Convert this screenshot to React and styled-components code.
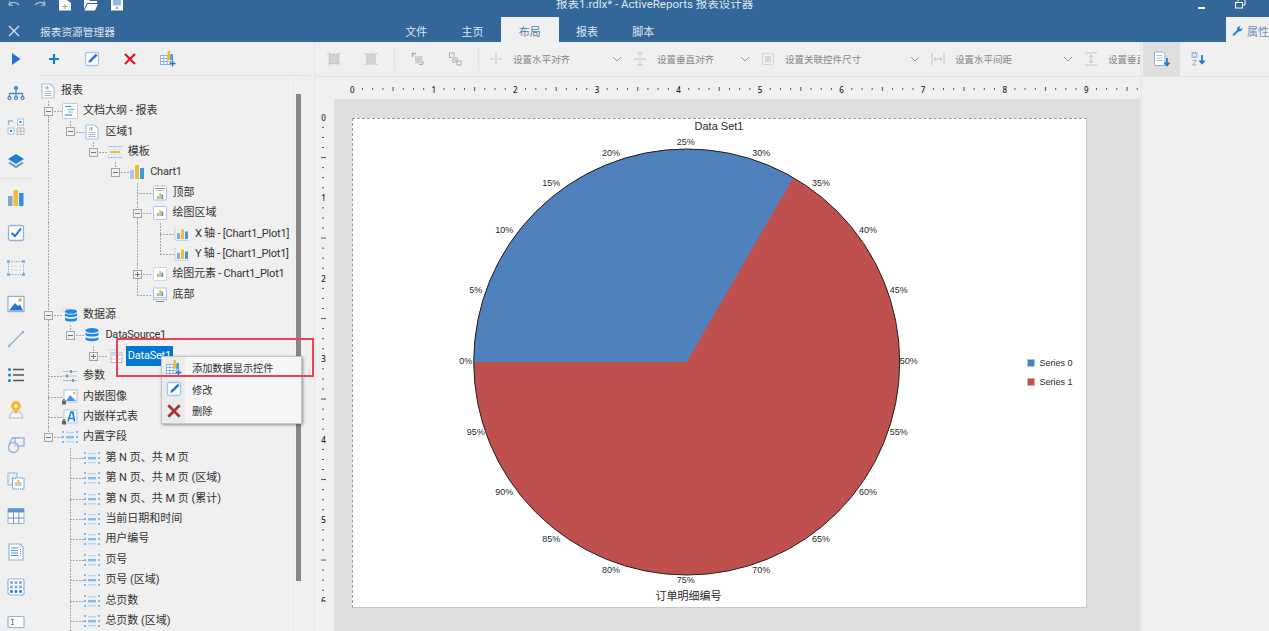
import React from 'react';
import styled, { createGlobalStyle } from 'styled-components';

const Global = createGlobalStyle`
  html, body { margin: 0; padding: 0; height: 100%; overflow: hidden; background: #f0f0f0; }
  #root { height: 100%; }
`;

const FONT = `Roboto, "Noto Sans CJK SC", sans-serif`;
const BLUE = '#336699';
const PANEL = '#f0f0f0';

const Shell = styled.div`
  width: 1269px; height: 631px; display: flex; flex-direction: column; overflow: hidden;
  background: ${PANEL}; font-family: ${FONT}; font-size: 11px; color: #333;
`;
const Header = styled.header`background: ${BLUE}; color: #dfe7ef; flex: none;`;
const TopRow = styled.div`display: flex; height: 17px; overflow: hidden; align-items: flex-start;`;
const Qat = styled.div`display: flex; padding-left: 1px;`;
const QatButton = styled.div`width: 25.8px; display: flex; justify-content: center;`;
const WindowTitle = styled.div`margin: -4px 0 0 426px; font-size: 11.5px; line-height: 16px; white-space: nowrap;`;
const WinButtons = styled.div`margin-left: auto; display: flex; padding-right: 10px;`;
const WinButton = styled.div`width: 38px; display: flex; justify-content: center;`;
const TabRow = styled.div`display: flex; height: 25px; align-items: stretch;`;
const Close = styled.div`width: 28px; padding-top: 3px; box-sizing: border-box; display: flex; align-items: center; justify-content: center;`;
const PanelName = styled.div`width: 360px; padding: 3px 0 0 12px; box-sizing: border-box; display: flex; align-items: center; font-size: 10.7px;`;
const Tab = styled.div`
  display: flex; align-items: center; justify-content: center; width: ${p => (p.$active ? 58 : 56.4)}px;
  padding-top: 3px; box-sizing: border-box;
  background: ${p => (p.$active ? PANEL : 'transparent')}; color: ${p => (p.$active ? '#4f7fae' : '#dfe7ef')};
`;
const PropTab = styled.div`
  margin-left: auto; width: 43px; background: ${PANEL}; color: #6a90b6; display: flex; align-items: center;
  gap: 4px; padding: 3px 0 0 6px; box-sizing: border-box; white-space: nowrap; overflow: hidden;
`;

const Body = styled.div`flex: 1; display: flex; min-height: 0;`;

const Rail = styled.nav`width: 35px; flex: none; padding-right: 3px; box-sizing: border-box; display: flex; flex-direction: column;`;
const RailGroup = styled.div`display: flex; flex-direction: column; & + & { border-top: 1px solid #e2e2e2; padding-top: 1px; }`;
const RailItem = styled.div`height: ${p => p.$h}px; display: flex; align-items: center; justify-content: center; flex: none;`;

const Explorer = styled.aside`
  position: relative; width: 280px; flex: none; display: flex; flex-direction: column; border-right: 1px solid #e8e8e8; box-sizing: border-box;
`;
const ExplorerBar = styled.div`display: flex; height: 34px; flex: none; position: relative;
  &::after { content: ''; position: absolute; left: 3px; right: 4px; bottom: 0; height: 1px; background: #e4e4e4; }
`;
const BarButton = styled.div`width: 38px; display: flex; align-items: center; justify-content: center;`;
const TreeWrap = styled.div`flex: 1; display: flex; min-height: 0;`;
const Tree = styled.div`width: 255px; flex: none; padding: 4.6px 0 0 1.8px; box-sizing: border-box; overflow: hidden;`;
const ScrollTrack = styled.div`flex: 1; border-left: 1px solid #f6f6f6; padding: 18px 0 0 5px;`;
const ScrollThumb = styled.div`width: 4.5px; height: 487px; background: #868686;`;
const Row = styled.div`display: flex; align-items: center; height: 20.4px; white-space: nowrap;`;
const DOTS_V = `background: repeating-linear-gradient(180deg, #a8a8a8 0 2px, transparent 2px 3px);`;
const DOTS_H = `background: repeating-linear-gradient(90deg, #a8a8a8 0 2px, transparent 2px 3px);`;
const Guide = styled.div`
  width: 22.4px; height: 100%; position: relative; flex: none;
  ${p => (p.$kind === 'v' || p.$kind === 'T') && `
    &::before { content: ''; position: absolute; left: 11px; width: 1px; top: 0; bottom: 0; ${DOTS_V} }
  `}
  ${p => p.$kind === 'L' && `
    &::before { content: ''; position: absolute; left: 11px; width: 1px; top: 0; height: 50%; ${DOTS_V} }
  `}
  ${p => (p.$kind === 'T' || p.$kind === 'L') && `
    &::after { content: ''; position: absolute; left: 11px; width: 14px; top: 50%; height: 1px; ${DOTS_H} }
  `}
`;
const Expander = styled.span`
  position: absolute; z-index: 1; left: 7px; top: 6px; width: 7px; height: 7px; background: ${PANEL}; border: 1px solid #a4a4a4;
  &::before { content: ''; position: absolute; left: 1px; right: 1px; top: 3px; height: 1px; background: #56809f; }
  ${p => p.$plus && `&::after { content: ''; position: absolute; top: 1px; bottom: 1px; left: 3px; width: 1px; background: #56809f; }`}
`;
const TreeIcon = styled.span`margin-left: 2.8px; width: 16px; height: 16px; flex: none; position: relative; z-index: 1;`;
const RootIconSlot = styled(TreeIcon)`margin-left: 3.2px;`;
const TreeLabel = styled.span`
  margin-left: ${p => (p.$sel ? 3 : 5)}px; padding: 0 ${p => (p.$sel ? 2 : 0)}px; line-height: 20px;
  letter-spacing: ${p => (p.$latin ? '-0.22px' : '0')};
  background: ${p => (p.$sel ? '#0078d7' : 'transparent')}; color: ${p => (p.$sel ? '#fff' : '#333')};
`;
const Highlight = styled.div`
  position: absolute; z-index: 3; left: 81px; top: 296px; width: 198px; height: 39px; box-sizing: border-box; border: 2px solid #ee4252;
`;
const Menu = styled.div`
  position: absolute; z-index: 2; left: 126px; top: 314px; width: 141px; height: 68px; box-sizing: border-box;
  background: linear-gradient(90deg, #ebebeb 0 23px, #f6f6f6 23px); border: 1px solid #c6c6c6; box-shadow: 1px 1px 3px rgba(0,0,0,.4);
`;
const MenuItem = styled.div`height: 21.5px; display: flex; align-items: center; font-size: 10.2px;`;
const MenuIcon = styled.span`width: 24px; padding-left: 4px; box-sizing: border-box; flex: none; display: flex; align-items: center;`;
const MenuText = styled.span`margin-left: 6px; color: #333;`;

const Center = styled.main`width: 825px; flex: none; display: flex; flex-direction: column; min-height: 0;`;
const Toolbar = styled.div`height: 34px; flex: none; display: flex; align-items: center; border-bottom: 1px solid #e4e4e4; overflow: hidden; font-size: 9.5px; color: #888;`;
const ToolButton = styled.div`width: ${p => p.$w || 38}px; height: 34px; flex: none; display: flex; align-items: center; justify-content: center;`;
const ToolSep = styled.div`width: 1px; height: 22px; flex: none; background: #e2e2e2; margin: 0 ${p => p.$m || 4}px 0 4px;`;
const Dropdown = styled.div`width: ${p => p.$w}px; flex: none; display: flex; align-items: center; white-space: nowrap;`;
const DropIcon = styled.span`width: 18px; flex: none; display: flex; justify-content: center; margin-right: 8px;`;
const Chevron = styled.span`margin-left: auto; padding-right: 9px; display: flex;`;
const HRuler = styled.div`height: 22px; flex: none; overflow: hidden;`;
const Work = styled.div`flex: 1; display: flex; min-height: 0;`;
const VRuler = styled.div`width: 19px; flex: none;`;
const Canvas = styled.div`flex: 1; background: #dfdfdf; padding: 19px 0 0 18px; overflow: hidden;`;
const Page = styled.div`
  width: 735px; height: 490px; box-sizing: border-box; background: #fff;
  border-top: 1px dashed #999; border-left: 1px dashed #999; border-right: 1px solid #c9c9c9; border-bottom: 1px solid #c9c9c9;
`;
const ChartSvg = styled.svg`display: block;`;
const ChartText = styled.text`font-family: "Liberation Sans", "Noto Sans CJK SC", sans-serif; font-size: ${p => p.$s}px; fill: #2a2a2a;`;
const RulerSvg = styled.svg`display: block;`;
const RulerText = styled.text`font-family: "Noto Sans", sans-serif; font-size: 8px; font-weight: 500; fill: #222;`;

const Props = styled.aside`flex: 1; border-left: 2px solid #e9e9e9; display: flex; flex-direction: column;`;
const PropsBar = styled.div`height: 34px; flex: none; display: flex; padding-left: 1px; border-bottom: 1px solid #e4e4e4;`;
const SortButton = styled.div`width: 37px; display: flex; align-items: center; justify-content: center; background: ${p => (p.$on ? '#dfdfdf' : 'transparent')};`;

const P = '#a8c5e6', B = '#1f7fdc', Y = '#f3bd33', L = '#8fb4dc';

/* ---------- header icons ---------- */
const Undo = ({ flip }) => (
  <svg width="14" height="9" viewBox="0 0 14 9" transform={flip ? 'scale(-1 1)' : undefined}>
    <path d="M3 1 L2 5 L6 5.5 M2.5 4.5 C5 1.5 9 1.5 12 5" fill="none" stroke="#a9bed3" strokeWidth="1.2" />
  </svg>
);
const NewDoc = () => (
  <svg width="12" height="11" viewBox="0 0 12 11"><path d="M0 0H8L12 3V10.5H0Z" fill="#fff" /><path d="M6 4V9M3.5 6.500H8.500" stroke="#7f9fc0" /></svg>
);
const Folder = () => (
  <svg width="14" height="11" viewBox="0 0 14 11"><path d="M0 0H5L6 1H13V3H3L0 9Z" fill="#fff" /><path d="M3.500 4H14L11 10.500H0.500Z" fill="#fff" /></svg>
);
const Save = () => (
  <svg width="12" height="11" viewBox="0 0 12 11"><rect width="12" height="10.500" fill="#fff" /><rect x="2" width="8" height="5.500" fill="#8fb8e6" /><circle cx="6" cy="8" r="1" fill="#5b7fa5" /></svg>
);
const Minimize = () => <svg width="10" height="13" viewBox="0 0 10 13"><rect x="1" y="7" width="7" height="2" fill="#fff" /></svg>;
const Restore = () => (
  <svg width="11" height="10" viewBox="0 0 11 10" fill="none" stroke="#fff"><path d="M3 1.500V-1H10V5H8" /><rect x="0.500" y="2.500" width="7" height="5.500" fill={BLUE} /></svg>
);
const Cross = () => <svg width="12" height="12" viewBox="0 0 12 12"><path d="M1 1L11 11M11 1L1 11" stroke="#dfe7ef" strokeWidth="1.200" /></svg>;
const Wrench = () => (
  <svg width="12" height="12" viewBox="0 0 12 12"><path d="M0.500 10L5.500 5C4.800 2.800 6.500 0.500 9.500 0.800L7.800 2.800L9.200 4.200L11.300 2.500C11.600 5.500 9.200 7.200 7 6.500L2 11.500Z" fill="#1f7fdc" /></svg>
);

/* ---------- rail icons ---------- */
const R = ({ children }) => <svg width="20" height="20" viewBox="0 0 20 20">{children}</svg>;
const railIcons = {
  play: <R><path d="M6 4L14.500 10L6 16Z" fill="#1976d2" /></R>,
  org: <R><g fill="none" stroke="#4f8fc9" strokeWidth="1.300"><circle cx="10" cy="5" r="1.500" fill="#4f8fc9" /><path d="M10 6V13M3.500 14V10.500H16.500V14" /><circle cx="3.500" cy="15" r="1.500" /><circle cx="10" cy="15" r="1.500" /><circle cx="16.500" cy="15" r="1.500" /></g></R>,
  group: <R><path d="M2.500 8V4H7" fill="none" stroke="#8fb4dc" strokeWidth="1.300" /><rect x="11.500" y="2" width="6" height="6" fill="#fff" stroke={P} /><rect x="13.500" y="4" width="2" height="2" fill={B} /><rect x="2" y="11" width="6" height="6" fill="#fff" stroke={P} /><rect x="4" y="13" width="2" height="2" fill={B} /><path d="M11 11H18V17.500H11ZM14.500 11V17.500M11 14.200H18" fill="none" stroke="#bbb" /></R>,
  layers: <R><path d="M10 3L18 8L10 13L2 8Z" fill={B} /><path d="M3 11.500L10 16L17 11.500" fill="none" stroke="#6b8fb0" strokeWidth="2" /></R>,
  chart: <R><rect x="2" y="8" width="4.500" height="10" fill="#7fa8d0" /><rect x="7.500" y="2" width="4.500" height="16" fill={Y} /><rect x="13" y="5" width="4.500" height="13" fill="#2f8fe8" /></R>,
  check: <R><rect x="2.500" y="2.500" width="15" height="15" rx="2" fill="#fff" stroke={L} strokeWidth="1.300" /><path d="M5.500 10L9 13L15 5.500" fill="none" stroke="#1976d2" strokeWidth="2" /></R>,
  rect: <R><rect x="2.500" y="3.500" width="15" height="13" fill="#f6f6f6" stroke={L} strokeDasharray="1.500 1" /><path d="M6 4V16M10 4V16M14 4V16M3 8H17M3 12H17" stroke="#e2e2e2" /><g fill={L}><rect x="1" y="2" width="3" height="3" /><rect x="16" y="2" width="3" height="3" /><rect x="1" y="15" width="3" height="3" /><rect x="16" y="15" width="3" height="3" /></g></R>,
  image: <R><rect x="2" y="2.500" width="16" height="15" fill="#fff" stroke={L} strokeWidth="1.300" /><path d="M3 16.500L9 9L12 12L14 10.500L17 16.500Z" fill="#2678c8" /><circle cx="14" cy="6" r="1.800" fill="#f2a93b" /></R>,
  line: <R><path d="M3 17L17 3" stroke={L} strokeWidth="1.500" /><circle cx="3" cy="17" r="1.200" fill={L} /><circle cx="17" cy="3" r="1.200" fill={L} /></R>,
  list: <R><g fill={B}><circle cx="3.500" cy="4.500" r="1.500" /><circle cx="3.500" cy="10" r="1.500" /><circle cx="3.500" cy="15.500" r="1.500" /></g><path d="M7 4.500H18M7 10H18M7 15.500H18" stroke="#555" strokeWidth="1.400" /></R>,
  pin: <R><path d="M3 18L5.500 12H14.500L17 18Z" fill="#f4f4f4" stroke="#bbb" /><path d="M10 14C7 10 5 8.500 5 6A5 5 0 0 1 15 6C15 8.500 13 10 10 14Z" fill={Y} /><circle cx="10" cy="6" r="1.800" fill="#fff" /></R>,
  shapes: <R><path d="M3 9L6.500 3H13.500" fill="none" stroke={L} strokeWidth="1.300" /><rect x="9" y="3" width="9" height="8" fill="#f0f0f0" stroke={L} strokeWidth="1.300" /><circle cx="7.500" cy="12.500" r="5" fill="#f0f0f0" fillOpacity=".4" stroke={L} strokeWidth="1.300" /></R>,
  docs: <R><path d="M2 2H11V14H2Z" fill="#eee" stroke={L} /><rect x="6.500" y="7" width="11.500" height="11" fill="#fff" stroke={B} strokeDasharray="1.300 1" /><rect x="9" y="11" width="6.500" height="4" fill="#d8cfa8" /><rect x="11.500" y="9" width="2" height="2" fill={Y} /></R>,
  table: <R><rect x="2" y="2.500" width="16" height="15" rx="1" fill="#fff" stroke={L} /><rect x="2" y="2.500" width="16" height="4" fill="#5c93cf" /><path d="M7.500 6.500V17.500M12.800 6.500V17.500M2 12H18" stroke="#5c93cf" /></R>,
  doclist: <R><path d="M3 2H14L17 5V18H3Z" fill="#fff" stroke={L} strokeWidth="1.200" /><path d="M5 6H12M5 8.500H12M5 11H12M5 13.500H12" stroke="#4f96dc" /><path d="M14.500 7V14" stroke="#888" strokeDasharray="1 1" /></R>,
  dots: <R><rect x="2" y="2" width="16" height="16" rx="2" fill="#fff" stroke={L} strokeWidth="1.200" />{[5.500, 10, 14.500].map(y => [5.500, 10, 14.500].map(x => <rect key={`${x}${y}`} x={x - 1.300} y={y - 1.300} width="2.600" height="2.600" fill={y > 10 ? '#1a73d2' : '#5fa5ea'} />))}</R>,
  textbox: <R><rect x="2" y="4.500" width="16" height="11" rx="1" fill="#fff" stroke={L} strokeWidth="1.200" /><path d="M5 7.500H8M5 12.500H8M6.500 7.500V12.500" stroke="#888" /></R>,
};

/* ---------- bar icons ---------- */
const PlusIcon = () => <svg width="14" height="14" viewBox="0 0 14 14"><path d="M7 2V12M2 7H12" stroke="#1a7ad4" strokeWidth="2.200" /></svg>;
const EditIcon = ({ s = 16 }) => (
  <svg width={s} height={s} viewBox="0 0 16 16"><rect x="1.500" y="1.500" width="13" height="13" rx="1.500" fill="#fff" stroke={P} strokeWidth="1.300" /><path d="M4.500 12L5.200 9.300L11.800 2.700L13.500 4.400L6.900 11Z" fill="#1976d2" /></svg>
);
const XIcon = ({ s = 14, c = '#e81123', w = 2.200 }) => <svg width={s} height={s} viewBox="0 0 14 14"><path d="M2 2L12 12M12 2L2 12" stroke={c} strokeWidth={w} /></svg>;
const AddData = () => (
  <svg width="16" height="16" viewBox="0 0 16 16"><rect x="0.500" y="4.500" width="10" height="9" fill="#fff" stroke={L} /><path d="M3.800 4.500V13.500M7.200 4.500V13.500M0.500 7.500H10.500M0.500 10.500H10.500" stroke={L} /><rect x="7.500" y="0" width="2.500" height="9" fill={Y} /><rect x="10.500" y="3" width="2.500" height="6" fill="#4f96dc" /><path d="M12.500 9.500V15.500M9.500 12.500H15.500" stroke="#1a7ad4" strokeWidth="1.500" /></svg>
);

/* ---------- toolbar icons (disabled grey) ---------- */
const T = ({ children }) => <svg width="18" height="16" viewBox="0 0 18 16" fill="none" stroke="#c6c6c6">{children}</svg>;
const Ctrl1 = () => <T><rect x="4.500" y="3.500" width="9" height="9" fill="#d2d2d2" /><path d="M2 3H16M2 13H16M4 1.500V14.500M14 1.500V14.500" strokeDasharray="1.500 1.500" /></T>;
const Ctrl2 = () => <T><rect x="4.500" y="3.500" width="9" height="9" fill="#d2d2d2" strokeDasharray="1.500 1" /><path d="M2 2.500H16M2 13.500H16" strokeDasharray="1.500 1.500" /></T>;
const Front = () => <T><path d="M3.500 6V2.500H7" strokeWidth="1.400" stroke="#aaa" /><rect x="6" y="5" width="7.500" height="7.500" fill="#cfcfcf" stroke="none" /><path d="M14 10V13.500H10" stroke="#aaa" /></T>;
const Back = () => <T><rect x="3.500" y="2" width="4.500" height="4.500" fill="#f4f4f4" stroke="#aaa" /><rect x="6" y="6" width="6" height="6" fill="#cfcfcf" stroke="none" /><rect x="11" y="10" width="4" height="4" fill="#f4f4f4" stroke="#aaa" /></T>;
const HAlign = () => <T><path d="M9 2V14M3 8H7M11 8H15" /></T>;
const VAlign = () => <T><path d="M3 8H15M9 2V6M9 10V14M6 2H12M6 14H12" /></T>;
const SizeI = () => <T><rect x="3.500" y="2.500" width="11" height="11" rx="1" strokeDasharray="1.500 1" /><rect x="6" y="5" width="6" height="6" fill="#d6d6d6" stroke="none" /></T>;
const HSpace = () => <T><path d="M3 2V14M15 2V14M5 8H13M5 8L7 6.500M5 8L7 9.500M13 8L11 6.500M13 8L11 9.500" /></T>;
const VSpace = () => <T><path d="M3 2H15M3 14H15M9 4V12M9 4L7.500 6M9 4L10.500 6M9 12L7.500 10M9 12L10.500 10" /></T>;
const Chev = () => <svg width="10" height="6" viewBox="0 0 10 6"><path d="M1 1L5 5L9 1" fill="none" stroke="#999" /></svg>;
const SortCat = () => (
  <svg width="18" height="16" viewBox="0 0 18 16"><path d="M1.500 1H10L12 3V14.500H1.500Z" fill="#fff" stroke={L} /><path d="M3.500 4.500H9M3.500 7H9M3.500 9.500H9" stroke="#bbb" /><path d="M14 7V14M11.500 11.500L14 14.500L16.500 11.500" fill="none" stroke="#1a7ad4" strokeWidth="1.700" /></svg>
);
const SortAz = () => (
  <svg width="18" height="16" viewBox="0 0 18 16"><rect x="1.500" y="1" width="6" height="6" fill="#9cc0e8" /><path d="M3 5.500L4.500 2.500L6 5.500" fill="none" stroke="#fff" /><path d="M2.500 9.500H6.500L2.500 14H6.500" fill="none" stroke="#aaa" /><path d="M12 4V12M9.500 9.500L12 12.500L14.500 9.500" fill="none" stroke="#1a7ad4" strokeWidth="1.700" /></svg>
);

/* ---------- tree icons ---------- */
const Bars = ({ x = 5, y = 5, k = 1 }) => (
  <g><rect x={x} y={y + 3 * k} width={1.800 * k} height={3 * k} fill="#8fb4dc" /><rect x={x + 2.200 * k} y={y} width={1.800 * k} height={6 * k} fill={Y} /><rect x={x + 4.400 * k} y={y + 1.500 * k} width={1.800 * k} height={4.500 * k} fill="#4f96dc" /></g>
);
const I = ({ children }) => <svg width="16" height="16" viewBox="0 0 16 16" display="block">{children}</svg>;
const Lock = () => <g><rect x="0" y="12" width="4" height="3.500" fill="#666" /><path d="M1 12V10.800H3V12" fill="none" stroke="#666" /></g>;
const FrameChart = ({ dash }) => (
  <g><rect x="1.500" y="1.500" width="13" height="13" rx="1" fill="#fff" stroke={P} strokeDasharray={dash ? '1.500 1' : undefined} /><Bars x={5} y={5} /></g>
);
const treeIcons = {
  doc: <I><path d="M2 1H10.500L14 4.500V15H2Z" fill="#fbfdff" stroke={P} strokeWidth="1.200" /><rect x="5" y="3.500" width="1.400" height="3" fill={Y} /><rect x="7" y="3" width="1.400" height="3.500" fill="#7fb0e4" /><path d="M4.500 8.500H11.500M4.500 10.500H11.500M4.500 12.500H11.500" stroke="#b9b9b9" /></I>,
  outline: <I><rect x="0.500" y="0.500" width="15" height="15" rx="1" fill="#fff" stroke="#c9c9c9" /><path d="M3 3.500H9" stroke="#3f8fdc" strokeWidth="1.200" /><path d="M6 6.500H12.500" stroke="#5bc6d0" strokeWidth="1.200" /><path d="M6 9H11" stroke="#7ed0a0" strokeWidth="1.200" /><path d="M3 12H10" stroke="#3f8fdc" strokeWidth="1.200" /></I>,
  band: <I><path d="M1 2.500H15M1 13.500H15" stroke="#6fb2ee" strokeDasharray="1.500 1" /><path d="M1 5.500H15M1 10.500H15" stroke="#cfe2f6" /><rect x="3" y="7" width="10" height="2" fill={Y} /></I>,
  chart: <I><rect x="1" y="6" width="4" height="9" fill="#a8c9ee" /><rect x="6" y="1" width="4" height="14" fill={Y} /><rect x="11" y="4" width="4" height="11" fill="#3f96ea" /></I>,
  top: <I><rect x="1.500" y="1" width="13" height="14" rx="1" fill="#fff" stroke={P} /><path d="M3 3.500H13" stroke="#888" /><path d="M4 5.500H12" stroke="#bbb" /><Bars x={5} y={8} /></I>,
  plot: <I><FrameChart /></I>,
  axis: <I><path d="M1 2V14.500H15" fill="none" stroke="#9cc0e8" strokeDasharray="1.200 1" /><rect x="3" y="7" width="3" height="6" fill="#7fb0e4" /><rect x="7" y="3.500" width="3" height="9.500" fill={Y} /><rect x="11" y="5.500" width="3" height="7.500" fill="#3f96ea" /></I>,
  elem: <I><FrameChart dash /></I>,
  foot: <I><rect x="1.500" y="1" width="13" height="9.500" fill="#fff" stroke={P} /><Bars x={5} y={3} /><path d="M1 12.500H15" stroke="#6fb2ee" strokeDasharray="1.500 1" /><path d="M4 14.500H12" stroke="#888" /></I>,
  db: <I><g fill="#1f87e6"><ellipse cx="8" cy="3.500" rx="6.500" ry="2.500" /><path d="M1.500 5.500C3 7.500 13 7.500 14.500 5.500V8C13 10 3 10 1.500 8Z" /><path d="M1.500 10C3 12 13 12 14.500 10V12.500C13 14.800 3 14.800 1.500 12.500Z" /></g></I>,
  db2: <I><path d="M1 1.500H6M0 4H3" stroke="#9cc9f2" strokeDasharray="1 1" /><g fill="#1f87e6"><ellipse cx="9" cy="4.500" rx="6" ry="2.300" /><path d="M3 6.300C4.500 8.200 13.500 8.200 15 6.300V8.700C13.500 10.500 4.500 10.500 3 8.700Z" /><path d="M3 10.500C4.500 12.400 13.500 12.400 15 10.500V13C13.500 15 4.500 15 3 13Z" /></g></I>,
  dataset: <I><path d="M1 2H11" stroke="#9cc9f2" strokeDasharray="1 1" /><rect x="4" y="4.500" width="11" height="10" fill="#fff" stroke="#bbb" /><path d="M4 7.500H15M4 11H15M9.500 7.500V14.500" stroke="#c5c5c5" /><rect x="4" y="4.500" width="11" height="3" fill="#cfe2f6" /></I>,
  sliders: <I><path d="M1 3.500H15M1 8H15M1 12.500H15" stroke="#b9b9b9" /><rect x="8" y="2" width="2" height="3" fill="#6f9ac8" /><rect x="4" y="6.500" width="2" height="3" fill="#6f9ac8" /><rect x="10" y="11" width="2" height="3" fill="#6f9ac8" /></I>,
  image: <I><rect x="2" y="1" width="13" height="12" fill="#fff" stroke={P} /><path d="M4 12L8 6L11 9L14 12Z" fill="#3f96ea" /><circle cx="12" cy="4" r="1.300" fill={Y} /><Lock /></I>,
  style: <I><rect x="2" y="1" width="13" height="13" fill="#fff" stroke={P} /><path d="M6 12.500L9 3H10.800L12.500 12.500M7 9.500H12" fill="none" stroke="#1f7fdc" strokeWidth="1.700" /><Lock /></I>,
  field: <I><path d="M1 2V4M1 7V9M1 12V14M15 2V4M15 7V9M15 12V14" stroke="#5fb0f2" strokeWidth="1.600" /><rect x="4" y="3" width="8" height="1.300" fill="#b5d8f8" /><rect x="4" y="7" width="8" height="2.400" fill="#7cc0f6" /><rect x="4" y="12" width="8" height="1.300" fill="#b5d8f8" /></I>,
};

/* ---------- data ---------- */
const railTop = ['play', 'org', 'group', 'layers'];
const railRest = ['chart', 'check', 'rect', 'image', 'line', 'list', 'pin', 'shapes', 'docs', 'table', 'doclist', 'dots', 'textbox'];
const c = ['v', '_', '_', '_'];
const fields = ['第 N 页、共 M 页', '第 N 页、共 M 页 (区域)', '第 N 页、共 M 页 (累计)', '当前日期和时间', '用户编号', '页号', '页号 (区域)', '总页数', '总页数 (区域)'];
const rows = [
  { g: ['T-'], ic: 'outline', t: '文档大纲 - 报表' },
  { g: ['v', 'L-'], ic: 'doc', t: '区域1' },
  { g: ['v', '_', 'L-'], ic: 'band', t: '模板' },
  { g: ['v', '_', '_', 'L-'], ic: 'chart', t: 'Chart1', latin: true },
  { g: [...c, 'T'], ic: 'top', t: '顶部' },
  { g: [...c, 'T-'], ic: 'plot', t: '绘图区域' },
  { g: [...c, 'v', 'T'], ic: 'axis', t: 'X 轴 - [Chart1_Plot1]', latin: true },
  { g: [...c, 'v', 'L'], ic: 'axis', t: 'Y 轴 - [Chart1_Plot1]', latin: true },
  { g: [...c, 'T+'], ic: 'elem', t: '绘图元素 - Chart1_Plot1', latin: true },
  { g: [...c, 'L'], ic: 'foot', t: '底部' },
  { g: ['T-'], ic: 'db2', t: '数据源' },
  { g: ['v', 'L-'], ic: 'db', t: 'DataSource1', latin: true },
  { g: ['v', '_', 'L+'], ic: 'dataset', t: 'DataSet1', sel: true, latin: true },
  { g: ['T'], ic: 'sliders', t: '参数' },
  { g: ['T'], ic: 'image', t: '内嵌图像' },
  { g: ['T'], ic: 'style', t: '内嵌样式表' },
  { g: ['L-'], ic: 'field', t: '内置字段' },
  ...fields.map(t => ({ g: ['_', 'T'], ic: 'field', t })),
];

const tabs = ['文件', '主页', '布局', '报表', '脚本'];
const drops = [
  { w: 144, I: HAlign, t: '设置水平对齐' },
  { w: 128, I: VAlign, t: '设置垂直对齐' },
  { w: 170, I: SizeI, t: '设置关联控件尺寸' },
  { w: 153, I: HSpace, t: '设置水平间距' },
  { w: 60, I: VSpace, t: '设置垂直间距', clip: true },
];

const PAGE_X = 352, PAGE_Y = 118;
const labels = [
  ['0%', 465.7, 361], ['5%', 475.7, 290.3], ['10%', 504.3, 230.3], ['15%', 551.3, 182.7], ['20%', 611, 153],
  ['25%', 685.7, 142.3], ['30%', 761.3, 153], ['35%', 821, 182.7], ['40%', 868, 230.3], ['45%', 898.7, 290.3],
  ['50%', 908.7, 361], ['55%', 898.7, 432.3], ['60%', 868, 492.3], ['65%', 821, 539.3], ['70%', 761.3, 569.7],
  ['75%', 685.7, 580.3], ['80%', 611, 569.7], ['85%', 551.3, 539.3], ['90%', 504.3, 492.3], ['95%', 475.7, 432.3],
];

const CX = 334.7, CY = 244, RAD = 213;
const Chart = () => {
  const ex = CX + RAD * Math.cos((300 * Math.PI) / 180);
  const ey = CY + RAD * Math.sin((300 * Math.PI) / 180);
  return (
    <ChartSvg width="733" height="488" viewBox="1 1 733 488">
      <circle cx={CX} cy={CY} r={RAD} fill="#c0504d" />
      <path d={`M${CX} ${CY}L${CX - RAD} ${CY}A${RAD} ${RAD} 0 0 1 ${ex} ${ey}Z`} fill="#4f81bd" />
      <circle cx={CX} cy={CY} r={RAD} fill="none" stroke="#222" strokeWidth="1" />
      <ChartText $s={11} x="367" y="8" textAnchor="middle" dominantBaseline="central">Data Set1</ChartText>
      {labels.map(([t, x, y]) => (
        <ChartText key={t} $s={9} x={x - PAGE_X} y={y - PAGE_Y} textAnchor="middle" dominantBaseline="central">{t}</ChartText>
      ))}
      <ChartText $s={11} x="336.600" y="478" textAnchor="middle" dominantBaseline="central">订单明细编号</ChartText>
      <rect x="675.500" y="241.500" width="7" height="7" fill="#4f81bd" stroke="#a9c3e2" strokeWidth=".6" />
      <ChartText $s={9} x="687.500" y="245" dominantBaseline="central">Series 0</ChartText>
      <rect x="675.500" y="260.500" width="7" height="7" fill="#c0504d" stroke="#e6a9a7" strokeWidth=".6" />
      <ChartText $s={9} x="687.500" y="263.700" dominantBaseline="central">Series 1</ChartText>
    </ChartSvg>
  );
};

const HorizontalRuler = () => {
  const step = 81.55 / 8, x0 = 352.3 - 315;
  const n = Array.from({ length: 78 }, (_, i) => i);
  return (
    <RulerSvg width="825" height="22">
      {n.map(i => (i % 8 === 0
        ? <RulerText key={i} x={x0 + i * step} y="12" textAnchor="middle" dominantBaseline="central">{i / 8}</RulerText>
        : <rect key={i} x={x0 + i * step - 0.5} y={i % 4 === 0 ? 10 : 11} width="1" height={i % 4 === 0 ? 4 : 2} fill="#555" />))}
    </RulerSvg>
  );
};
const VerticalRuler = () => {
  const step = 80.5 / 8, y0 = 117.3 - 99;
  const n = Array.from({ length: 49 }, (_, i) => i);
  return (
    <RulerSvg width="19" height="503">
      {n.map(i => (i % 8 === 0
        ? <RulerText key={i} x="8.500" y={y0 + i * step} textAnchor="middle" dominantBaseline="central">{i / 8}</RulerText>
        : <rect key={i} x={i % 4 === 0 ? 6 : 7} y={y0 + i * step - 0.5} width={i % 4 === 0 ? 5 : 2} height="1" fill="#555" />))}
    </RulerSvg>
  );
};

export default function App() {
  return (
    <Shell>
      <Global />
      <Header>
        <TopRow>
          <Qat>
            <QatButton><Undo /></QatButton>
            <QatButton><Undo flip /></QatButton>
            <QatButton><NewDoc /></QatButton>
            <QatButton><Folder /></QatButton>
            <QatButton><Save /></QatButton>
          </Qat>
          <WindowTitle>报表1.rdlx* - ActiveReports 报表设计器</WindowTitle>
          <WinButtons>
            <WinButton><Minimize /></WinButton>
            <WinButton><Restore /></WinButton>
          </WinButtons>
        </TopRow>
        <TabRow>
          <Close><Cross /></Close>
          <PanelName>报表资源管理器</PanelName>
          {tabs.map(t => <Tab key={t} $active={t === '布局'}>{t}</Tab>)}
          <PropTab><Wrench />属性</PropTab>
        </TabRow>
      </Header>
      <Body>
        <Rail>
          <RailGroup>
            {railTop.map(k => <RailItem key={k} $h={34}>{railIcons[k]}</RailItem>)}
          </RailGroup>
          <RailGroup>
            {railRest.map(k => <RailItem key={k} $h={35.4}>{railIcons[k]}</RailItem>)}
          </RailGroup>
        </Rail>
        <Explorer>
          <ExplorerBar>
            <BarButton><PlusIcon /></BarButton>
            <BarButton><EditIcon /></BarButton>
            <BarButton><XIcon /></BarButton>
            <BarButton><AddData /></BarButton>
          </ExplorerBar>
          <TreeWrap>
            <Tree>
              <Row>
                <RootIconSlot>{treeIcons.doc}</RootIconSlot>
                <TreeLabel>报表</TreeLabel>
              </Row>
              {rows.map((r, i) => (
                <Row key={i}>
                  {r.g.map((g, j) => (
                    <Guide key={j} $kind={g[0]}>
                      {g[1] && <Expander $plus={g[1] === '+'} />}
                    </Guide>
                  ))}
                  <TreeIcon>{treeIcons[r.ic]}</TreeIcon>
                  <TreeLabel $sel={r.sel} $latin={r.latin}>{r.t}</TreeLabel>
                </Row>
              ))}
            </Tree>
            <ScrollTrack><ScrollThumb /></ScrollTrack>
          </TreeWrap>
          <Menu>
            <MenuItem><MenuIcon><AddData /></MenuIcon><MenuText>添加数据显示控件</MenuText></MenuItem>
            <MenuItem><MenuIcon><EditIcon /></MenuIcon><MenuText>修改</MenuText></MenuItem>
            <MenuItem><MenuIcon><XIcon s={16} c="#a5352c" w={2.400} /></MenuIcon><MenuText>删除</MenuText></MenuItem>
          </Menu>
          <Highlight />
        </Explorer>
        <Center>
          <Toolbar>
            <ToolButton $w={37}><Ctrl1 /></ToolButton>
            <ToolButton><Ctrl2 /></ToolButton>
            <ToolSep />
            <ToolButton $w={37}><Front /></ToolButton>
            <ToolButton><Back /></ToolButton>
            <ToolSep $m={8} />
            {drops.map(d => (
              <Dropdown key={d.t} $w={d.w}>
                <DropIcon><d.I /></DropIcon>
                {d.t}
                {!d.clip && <Chevron><Chev /></Chevron>}
              </Dropdown>
            ))}
          </Toolbar>
          <HRuler><HorizontalRuler /></HRuler>
          <Work>
            <VRuler><VerticalRuler /></VRuler>
            <Canvas>
              <Page><Chart /></Page>
            </Canvas>
          </Work>
        </Center>
        <Props>
          <PropsBar>
            <SortButton $on><SortCat /></SortButton>
            <SortButton><SortAz /></SortButton>
          </PropsBar>
        </Props>
      </Body>
    </Shell>
  );
}
